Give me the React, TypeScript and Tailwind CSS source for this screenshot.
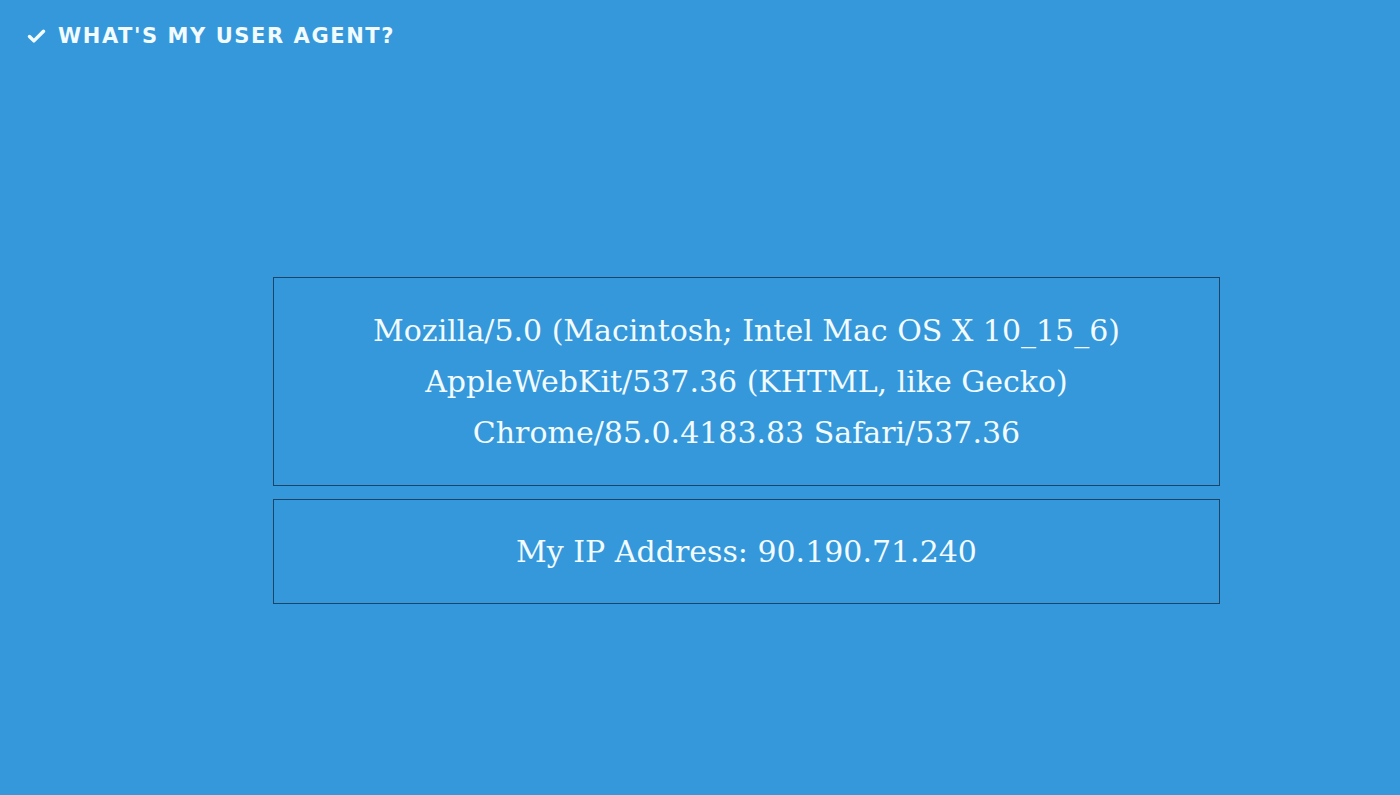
import { Check } from "lucide-react";

function InfoBox({ lines, pad }: { lines: string[]; pad: string }) {
  return (
    <div className={`border border-[#1b4466] text-center ${pad}`}>
      {lines.map((l) => (
        <p key={l} className="leading-[51px]">{l}</p>
      ))}
    </div>
  );
}

export default function App() {
  return (
    <div className="min-h-[795px] w-full bg-[#3498db] text-[#f2fbff]">
      <header className="flex h-[48px] items-center gap-[11px] pl-[26px] pt-[24px]">
        <Check size={21} strokeWidth={4} className="text-[#f2fbff]" />
        <h1
          className="text-[21px] leading-[24px] font-bold uppercase tracking-[0.075em]"
          style={{ fontFamily: '"DejaVu Sans", sans-serif' }}
        >
          What's my user agent?
        </h1>
      </header>

      <main
        className="ml-[273px] mt-[229px] flex w-[947px] flex-col gap-[13px] text-[30px]"
        style={{ fontFamily: '"DejaVu Serif", serif' }}
      >
        <InfoBox
          pad="py-[27px]"
          lines={[
            "Mozilla/5.0 (Macintosh; Intel Mac OS X 10_15_6)",
            "AppleWebKit/537.36 (KHTML, like Gecko)",
            "Chrome/85.0.4183.83 Safari/537.36",
          ]}
        />
        <InfoBox pad="py-[26px]" lines={["My IP Address: 90.190.71.240"]} />
      </main>
    </div>
  );
}
